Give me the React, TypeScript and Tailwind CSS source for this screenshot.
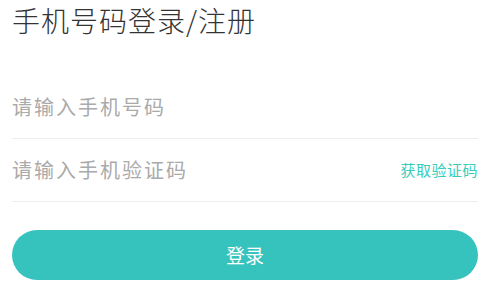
import React from 'react';

export default function App() {
    return (
        <div className="w-[494px] h-[287px] bg-white overflow-hidden pl-3 pr-4 font-['Noto_Sans_CJK_SC','Noto_Sans',sans-serif]">
            <h1 className="text-[28px] leading-[40px] tracking-[1px] font-light text-[#333333] h-[76px]">手机号码登录/注册</h1>

            <div className="flex items-center h-[63px] border-b border-[#eeeeee]">
                <input
                    className="flex-1 text-[20px] tracking-[2px] text-[#333333] placeholder:text-[#aaaaaa] outline-none bg-transparent"
                    placeholder="请输入手机号码"
                />
            </div>
            <div className="flex items-center h-[63px] border-b border-[#eeeeee]">
                <input
                    className="flex-1 min-w-0 text-[20px] tracking-[2px] text-[#333333] placeholder:text-[#aaaaaa] outline-none bg-transparent"
                    placeholder="请输入手机验证码"
                />
                <button className="text-[15px] tracking-[0.5px] text-[#36cdbb] shrink-0">获取验证码</button>
            </div>

            <button className="mt-[28px] w-full h-[50px] rounded-full bg-[#36c3bd] text-white text-[19px]">登录</button>
        </div>
    );
}
